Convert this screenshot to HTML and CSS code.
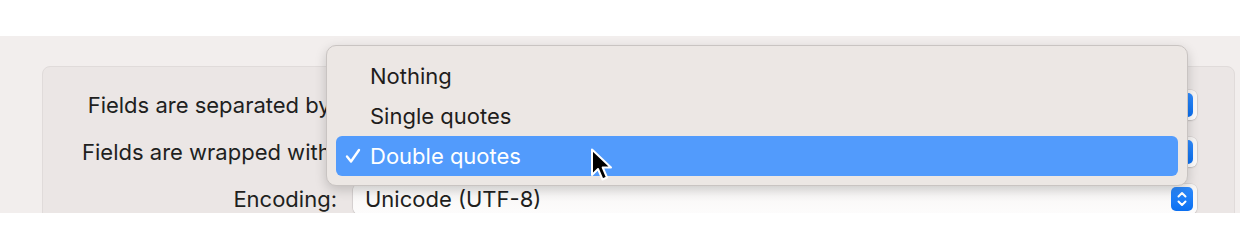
FILE: index.html
```html
<!DOCTYPE html>
<html>
<head>
<meta charset="utf-8">
<link rel="stylesheet" href="styles.css">
</head>
<body>
<div class="top-gap"></div>
<div class="window">
  <div class="group">
    <div class="form">
      <div class="label">Fields are separated by:</div>
      <div class="popup"><span class="popup-text"></span><span class="stepper"><svg width="12" height="18" viewBox="0 0 12 18"><path d="M2.5 6.5 L6 3 L9.5 6.5 M2.5 11.5 L6 15 L9.5 11.5" fill="none" stroke="#fff" stroke-width="2" stroke-linecap="round" stroke-linejoin="round"/></svg></span></div>
      <div class="label">Fields are wrapped with:</div>
      <div class="popup"><span class="popup-text"></span><span class="stepper"><svg width="12" height="18" viewBox="0 0 12 18"><path d="M2.5 6.5 L6 3 L9.5 6.5 M2.5 11.5 L6 15 L9.5 11.5" fill="none" stroke="#fff" stroke-width="2" stroke-linecap="round" stroke-linejoin="round"/></svg></span></div>
      <div class="label">Encoding:</div>
      <div class="popup"><span class="popup-text">Unicode (UTF-8)</span><span class="stepper"><svg width="12" height="18" viewBox="0 0 12 18"><path d="M2.5 6.5 L6 3 L9.5 6.5 M2.5 11.5 L6 15 L9.5 11.5" fill="none" stroke="#fff" stroke-width="2" stroke-linecap="round" stroke-linejoin="round"/></svg></span></div>
    </div>
  </div>
</div>
<div class="menu">
  <div class="menu-item"><span class="check"></span>Nothing</div>
  <div class="menu-item"><span class="check"></span>Single quotes</div>
  <div class="menu-item selected"><span class="check"><svg width="16" height="16" viewBox="0 0 16 16"><path d="M2 8.5 L6 13.5 L14 2" fill="none" stroke="#fff" stroke-width="2.4" stroke-linecap="round" stroke-linejoin="round"/></svg></span>Double quotes</div>
</div>
<svg class="cursor" width="24" height="36" viewBox="0 0 24 36"><path d="M2 1.5 L2 27 L8 21 L12.5 31.5 L17 29.5 L12.7 19.5 L21 19.5 Z" fill="#000" stroke="#fff" stroke-width="2" stroke-linejoin="round"/></svg>
</body>
</html>
```
FILE: styles.css
```css
html, body {
  margin: 0;
  padding: 0;
  background: #ffffff;
  width: 1240px;
  height: 252px;
  overflow: hidden;
  font-family: Inter, "Liberation Sans", sans-serif;
  color: #211f1e;
}

.top-gap {
  height: 36px;
}

.window {
  height: 177px;
  background: #f2eeed;
  overflow: hidden;
  padding: 30px 5px 0 42px;
  box-sizing: border-box;
}

.group {
  background: #ebe6e5;
  border: 1px solid #e0dbda;
  border-radius: 8px;
  height: 200px;
  padding: 23px 37px 0 0;
  box-sizing: border-box;
}

.form {
  display: grid;
  grid-template-columns: 294px 1fr;
  column-gap: 16px;
  row-gap: 17px;
  align-items: center;
}

.label {
  text-align: right;
  font-size: 22px;
  white-space: nowrap;
}

.popup {
  height: 30px;
  background: linear-gradient(#f7f5f4, #fdfcfc);
  border-radius: 6px;
  box-shadow: 0 0 0 0.5px rgba(0,0,0,0.12), 0 1px 2px rgba(0,0,0,0.12);
  display: flex;
  align-items: center;
  justify-content: space-between;
  padding: 0 4px 0 12px;
  font-size: 22px;
}

.stepper {
  width: 22px;
  height: 24px;
  border-radius: 5px;
  background: linear-gradient(#2f8cff, #0b6ff0);
  display: flex;
  align-items: center;
  justify-content: center;
}

.menu {
  position: absolute;
  left: 326px;
  top: 45px;
  width: 862px;
  height: 141px;
  box-sizing: border-box;
  background: #ece7e4;
  border-radius: 10px;
  border: 1px solid #c9c4c2;
  box-shadow: 0 4px 12px rgba(0,0,0,0.18);
  padding: 10px 9px 0 9px;
}

.menu-item {
  height: 40px;
  display: flex;
  align-items: center;
  font-size: 22px;
  color: #1f1d1c;
  border-radius: 6px;
}

.check {
  width: 34px;
  flex: none;
  display: flex;
  justify-content: center;
}

.menu-item.selected {
  background: #529bfc;
  color: #ffffff;
}

.cursor {
  position: absolute;
  left: 590px;
  top: 148px;
}
```
